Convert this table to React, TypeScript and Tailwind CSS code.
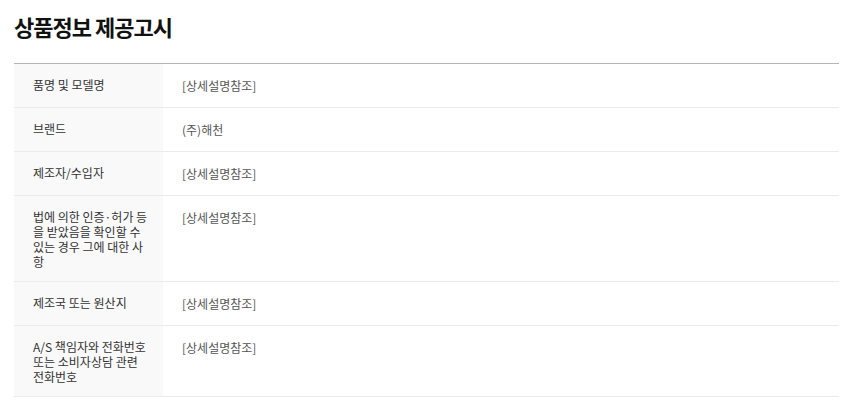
import React from "react";

const rows: { label: string[]; value: string }[] = [
  { label: ["품명 및 모델명"], value: "[상세설명참조]" },
  { label: ["브랜드"], value: "(주)해천" },
  { label: ["제조자/수입자"], value: "[상세설명참조]" },
  {
    label: ["법에 의한 인증·허가 등", "을 받았음을 확인할 수", "있는 경우 그에 대한 사", "항"],
    value: "[상세설명참조]",
  },
  { label: ["제조국 또는 원산지"], value: "[상세설명참조]" },
  { label: ["A/S 책임자와 전화번호", "또는 소비자상담 관련", "전화번호"], value: "[상세설명참조]" },
];

export default function App() {
  return (
    <div
      className="w-[857px] h-[405px] bg-white pl-[14px] pr-[18px] pt-[11px] overflow-hidden"
      style={{ fontFamily: '"Noto Sans CJK KR", "Noto Sans", sans-serif' }}
    >
      <h2 className="text-[22px] leading-[30px] font-bold tracking-[-1px] text-[#111]">상품정보 제공고시</h2>
      <div className="mt-[22px] border-t border-[#b5b5b5]">
        {rows.map((r, i) => (
          <div key={i} className="flex border-b border-[#ebebeb] text-[12px]">
            <div className="w-[149px] shrink-0 bg-[#f9f9f9] pl-[19px] pr-[8px] pt-[13px] pb-[12px] leading-[15px] text-[#333] whitespace-nowrap">
              {r.label.map((l, j) => (
                <div key={j}>{l}</div>
              ))}
            </div>
            <div className="flex-1 pl-[19px] py-[14px] leading-[15px] text-[#555]">{r.value}</div>
          </div>
        ))}
      </div>
    </div>
  );
}
